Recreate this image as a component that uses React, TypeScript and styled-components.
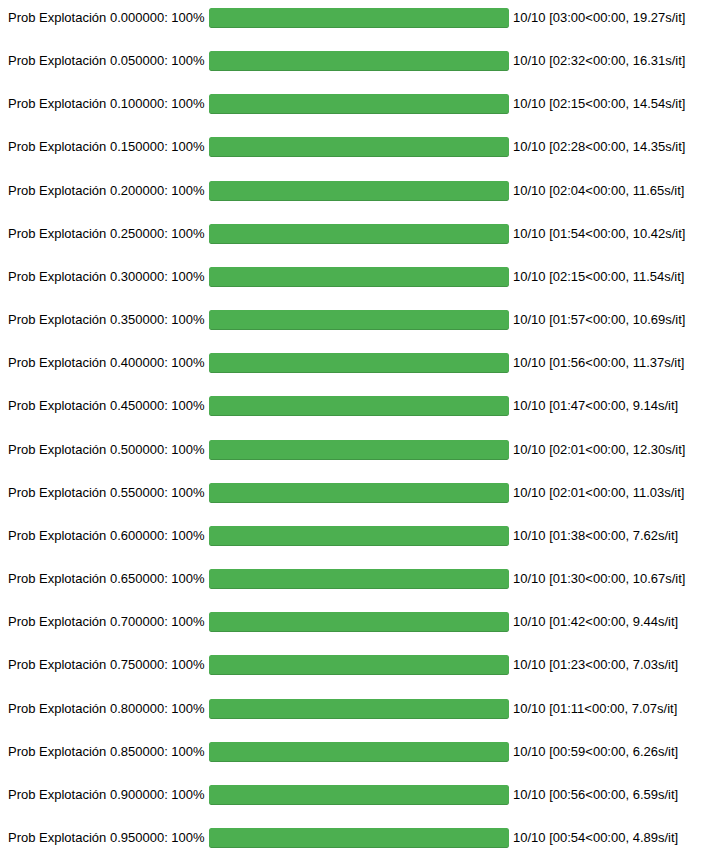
import React from "react";
import styled, { createGlobalStyle } from "styled-components";

const Global = createGlobalStyle`
  html, body { margin: 0; padding: 0; background: #fff; }
  body { font-family: "Liberation Sans", Arial, sans-serif; }
`;

const List = styled.div`
  display: flex;
  flex-direction: column;
  padding-top: 8px;
`;

const Row = styled.div`
  display: flex;
  align-items: flex-start;
  height: 43.16px;
  font-size: 13px;
  color: #000;
`;

const Label = styled.div`
  width: 209px;
  flex-shrink: 0;
  box-sizing: border-box;
  padding-left: 8px;
  line-height: 20px;
  white-space: nowrap;
`;

const Track = styled.div`
  width: 300px;
  flex-shrink: 0;
  height: 20px;
  box-sizing: border-box;
  background: #eee;
  border-radius: 2px;
  overflow: hidden;
`;

const Fill = styled.div`
  height: 100%;
  background: #4caf50;
  border-radius: 2px;
  box-shadow: inset 0 -1px 0 rgba(0, 0, 0, 0.15);
`;

const Stats = styled.div`
  padding-left: 4px;
  line-height: 20px;
  white-space: nowrap;
`;

const rows: [string, string, string][] = [
  ["0.000000", "03:00", "19.27"],
  ["0.050000", "02:32", "16.31"],
  ["0.100000", "02:15", "14.54"],
  ["0.150000", "02:28", "14.35"],
  ["0.200000", "02:04", "11.65"],
  ["0.250000", "01:54", "10.42"],
  ["0.300000", "02:15", "11.54"],
  ["0.350000", "01:57", "10.69"],
  ["0.400000", "01:56", "11.37"],
  ["0.450000", "01:47", "9.14"],
  ["0.500000", "02:01", "12.30"],
  ["0.550000", "02:01", "11.03"],
  ["0.600000", "01:38", "7.62"],
  ["0.650000", "01:30", "10.67"],
  ["0.700000", "01:42", "9.44"],
  ["0.750000", "01:23", "7.03"],
  ["0.800000", "01:11", "7.07"],
  ["0.850000", "00:59", "6.26"],
  ["0.900000", "00:56", "6.59"],
  ["0.950000", "00:54", "4.89"],
];

export default function App() {
  return (
    <>
      <Global />
      <List>
        {rows.map(([p, t, r]) => (
          <Row key={p}>
            <Label>Prob Explotación {p}: 100%</Label>
            <Track>
              <Fill style={{ width: "100%" }} />
            </Track>
            <Stats>
              10/10 [{t}&lt;00:00, {r}s/it]
            </Stats>
          </Row>
        ))}
      </List>
    </>
  );
}
